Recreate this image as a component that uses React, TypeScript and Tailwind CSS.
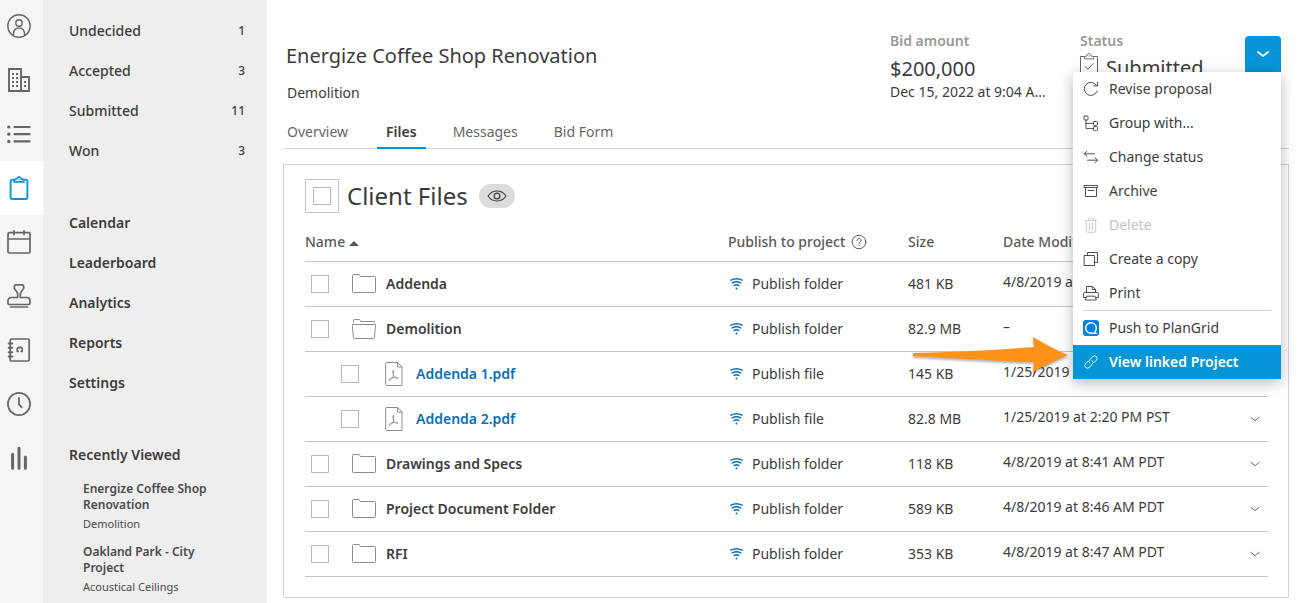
import React from 'react';
import clsx from 'clsx';

type IconProps = { className?: string };

const stroke = {
  fill: 'none',
  stroke: 'currentColor',
  strokeLinecap: 'round',
  strokeLinejoin: 'round',
} as const;

function RailIcon({ name }: { name: string }) {
  return (
    <svg viewBox="0 0 24 24" className="w-6 h-6" strokeWidth={1.7} {...stroke} aria-hidden="true">
      {name === 'Account' && (
        <g strokeWidth={1.4}>
          <circle cx="12" cy="12" r="11.2" />
          <circle cx="12" cy="9" r="3.2" />
          <path d="M6.3 21.3c0-4.6 2-7.4 5.7-7.4s5.7 2.8 5.7 7.4" />
        </g>
      )}
      {name === 'Companies' && (
        <g strokeLinejoin="miter" strokeLinecap="butt">
          <path d="M2 23V1h12v22zM14 9h8v14h-8z" strokeWidth={1.9} />
          <path d="M5 6h2M9 6h2M5 10h2M9 10h2M5 14h2M9 14h2M5 18h2M9 18h2M17 14h2M17 18h2" strokeWidth={2} />
        </g>
      )}
      {name === 'Lists' && (
        <g strokeWidth={2.2}>
          <path d="M7.5 5h15M7.5 12.2h15M7.5 19.4h15" />
          <path d="M1.7 5h.2M1.7 12.2h.2M1.7 19.4h.2" strokeWidth={3.2} />
        </g>
      )}
      {name === 'Bids' && (
        <g strokeWidth={1.9}>
          <path d="M7 3.6H5A1.5 1.5 0 0 0 3.6 5v16.6A1.4 1.4 0 0 0 5 23h14a1.4 1.4 0 0 0 1.4-1.4V5A1.5 1.5 0 0 0 19 3.6h-2" />
          <path d="M7 5.8c0-2 .8-2.8 2.7-2.9.5-1.3 1.2-2 2.3-2s1.8.7 2.3 2c1.9.1 2.7.9 2.7 2.9z" strokeWidth={1.7} />
          <path d="M12 3.3v.2" strokeWidth={1.2} />
        </g>
      )}
      {name === 'Calendar' && (
        <path d="M2.3 2.7h19.4A1.3 1.3 0 0 1 23 4v17.7a1.3 1.3 0 0 1-1.3 1.3H2.3A1.3 1.3 0 0 1 1 21.7V4a1.3 1.3 0 0 1 1.3-1.3zM1 9h22M7 .8v3.7M17 .8v3.7" />
      )}
      {name === 'Approvals' && (
        <g>
          <path d="M10.7 13.500c.2-4.500-.2-5.300-2.300-7.500C6.600 4 7 .8 9 .8h6c2 0 2.400 3.200.6 5.200-2.100 2.200-2.500 3-2.300 7.500H20c1.900 0 3 1.400 3 3.300v2.400c0 .8-.6 1.300-1.300 1.300H2.300c-.7 0-1.300-.5-1.300-1.300v-2.400c0-1.900 1.100-3.300 3-3.300z" />
          <path d="M3.500 23h17" />
        </g>
      )}
      {name === 'Contacts' && (
        <g>
          <path d="M4.500 1h16.200c.9 0 1.500.6 1.500 1.300v19.400c0 .7-.6 1.300-1.500 1.300H4.500c-.8 0-1.300-.6-1.300-1.300V2.300C3.200 1.600 3.700 1 4.500 1z" />
          <path d="M1.700 5.500h3.600M1.700 9.800h3.600M1.700 14.200h3.600M1.700 18.500h3.600" strokeWidth={1.9} />
          <path d="M10.200 13.500h1c-2-1.600-1.600-4 1.500-4.100 3.100.1 3.500 2.500 1.500 4.100h1" strokeWidth={1.6} />
        </g>
      )}
      {name === 'History' && (
        <g>
          <circle cx="12" cy="12" r="11.1" />
          <path d="M12 5.800v6.500l2.800 3" strokeWidth={1.8} />
        </g>
      )}
      {name === 'Insights' && <path d="M5.600 8.300v14M12 2.300v20M18.400 11v11.300" strokeWidth={3} />}
    </svg>
  );
}

function MenuIcon({ name }: { name: string }) {
  if (name === 'plangrid') {
    return (
      <svg viewBox="0 0 16 16" className="w-4 h-4 shrink-0" aria-hidden="true">
        <rect width="16" height="16" rx="3" fill="#0081e3" />
        <path d="M12.900 13.300H8A5.300 5.300 0 1 1 12.900 10c-.4 1-.9 1.600-.9 1.900z" fill="none" stroke="#fff" strokeWidth={1.4} />
      </svg>
    );
  }
  return (
    <svg viewBox="0 0 16 16" className="w-4 h-4 shrink-0" {...stroke} strokeWidth={0.9} aria-hidden="true">
      {name === 'revise' && <path d="M14.200 10A6.600 6.600 0 1 1 13.500 4.300M14.600 1.300v3.600h-3.700" />}
      {name === 'group' && (
        <g>
          <rect x="1" y="1" width="4" height="4" rx=".8" />
          <rect x="10.500" y="6.400" width="4" height="4" rx=".8" />
          <rect x="10.500" y="11.600" width="4" height="4" rx=".8" />
          <path d="M3 5v8.600h7.500M3 8.400h7.500" />
        </g>
      )}
      {name === 'status' && <path d="M11.500 4.800h-10M4 2.300 1.300 4.800 4 7.300M4.500 11.200h10M12 8.700l2.700 2.500-2.700 2.500" />}
      {name === 'archive' && <path d="M1.500 2.500h13v2h-13zM2.500 4.500v9h11v-9M5 7.500h6" />}
      {name === 'delete' && (
        <path d="M2.300 3.500h11.400M5.500 3.300V2c0-.5.3-.8.8-.8h3.400c.5 0 .8.3.8.8v1.300M3.300 3.500v10.400c0 .9.500 1.400 1.400 1.400h6.600c.9 0 1.400-.5 1.400-1.400V3.500M6.500 5.800v7M9.500 5.800v7" />
      )}
      {name === 'copy' && <path d="M1.500 4.500h10v10h-10zM4.500 4.500v-3h10v10h-3" />}
      {name === 'print' && (
        <path d="M3.500 7.500v-6h6l3 2.800v3.200M9.300 1.700v2.800h3M3 12.500H.6V8.300c0-.5.4-.8.9-.8h13c.5 0 .9.300.9.800v4.200H13M4 11.200h8l1.300 3.800H2.700z" />
      )}
      {name === 'link' && (
        <path d="M6.700 9.300a2.600 2.600 0 0 1 0-3.600L9.800 2.600a2.500 2.500 0 0 1 3.600 3.600l-2.600 2.600M9.300 6.700a2.600 2.600 0 0 1 0 3.600l-3.100 3.100a2.500 2.500 0 0 1-3.600-3.600l2.600-2.600" />
      )}
    </svg>
  );
}

function Chevron({ className }: IconProps) {
  return (
    <svg viewBox="0 0 12 8" className={className} {...stroke} aria-hidden="true">
      <path d="M1 2l5 4 5-4" />
    </svg>
  );
}

function FileIcon({ kind }: { kind: string }) {
  return (
    <svg viewBox="0 0 24 24" className="w-6 h-6 shrink-0 text-[#8c8c8c]" {...stroke} strokeWidth={1} aria-hidden="true">
      {kind === 'folder' && <path d="M.5 3.300c0-.5.300-.8.800-.8h5.900l1.200 2h14.300c.5 0 .8.300.8.800v14.400c0 .5-.3.800-.8.800H1.300c-.5 0-.8-.3-.8-.8z" />}
      {kind === 'open' && (
        <g>
          <path d="M1.500 5.500V3.300c0-.5.300-.8.800-.8h5.400l1.200 2h12.800c.5 0 .8.300.8.800v.4" />
          <path d="M.5 7.500h23l-1 13.400c0 .4-.3.600-.7.600H2.200c-.4 0-.7-.2-.7-.6z" />
        </g>
      )}
      {kind === 'pdf' && (
        <g>
          <path d="M4.500.5h11l4.500 4.500v18.500H4.500c-.5 0-.8-.3-.8-.8V1.300c0-.5.300-.8.800-.8zM15.500.5V5H20" />
          <path d="M11.300 8.800c-1.600.3-.4 2.800.300 4.300-.7 2.200-2 4.300-3.300 5.200-1 .7-2-.3-1-1.200 1.500-1.300 5.800-2.300 7.800-1.900 1.300.3 1 1.700-.2 1.400-1.500-.4-3-1.900-3.600-3.600.4-1.500 1.300-4.400 0-4.200z" strokeWidth={0.8} />
        </g>
      )}
    </svg>
  );
}

function PublishIcon() {
  return (
    <svg viewBox="0 0 13 12" className="w-[13px] h-3 shrink-0 text-[#0a70b8]" {...stroke} strokeWidth={1.5} aria-hidden="true">
      <path d="M.9 2.200c3.300-1.700 7.900-1.700 11.200 0M2.300 4.900c2.500-1.400 5.900-1.400 8.400 0M4.200 7.500c1.400-.8 3.200-.8 4.600 0" />
      <path d="M6.500 10.400h.01" strokeWidth={2} />
    </svg>
  );
}

function Checkbox({ label }: { label: string }) {
  return (
    <input
      type="checkbox"
      aria-label={label}
      className="appearance-none block w-[18px] h-[18px] shrink-0 border border-[#b8b8b8] bg-white checked:bg-[#0696d7]"
    />
  );
}

const railItems = ['Account', 'Companies', 'Lists', 'Bids', 'Calendar', 'Approvals', 'Contacts', 'History', 'Insights'];

function IconRail() {
  return (
    <nav aria-label="Main" className="w-[43px] shrink-0 bg-[#f5f5f5] text-[#666]">
      <div className="-mt-px flex flex-col">
        {railItems.map((name) => (
          <button
            key={name}
            aria-label={name}
            className={clsx(
              'h-[54px] pr-[5px] flex items-center justify-center',
              name === 'Bids' && 'bg-white text-[#0696d7]'
            )}
          >
            <RailIcon name={name} />
          </button>
        ))}
      </div>
    </nav>
  );
}

const bidCounts = [
  { label: 'Undecided', count: 1 },
  { label: 'Accepted', count: 3 },
  { label: 'Submitted', count: 11 },
  { label: 'Won', count: 3 },
];

const pages = ['Calendar', 'Leaderboard', 'Analytics', 'Reports', 'Settings'];

const recent = [
  { title: 'Energize Coffee Shop Renovation', trade: 'Demolition' },
  { title: 'Oakland Park - City Project', trade: 'Acoustical Ceilings' },
];

function Sidebar() {
  return (
    <aside className="w-56 shrink-0 bg-[#eee] pt-[11px] pl-[26px] pr-[22px] text-sm text-[#3c3c3c]">
      <div className="flex flex-col">
        {bidCounts.map((item) => (
          <a key={item.label} href="#" className="h-10 flex items-center justify-between font-medium">
            <span>{item.label}</span>
            <span className="text-xs">{item.count}</span>
          </a>
        ))}
      </div>
      <div className="mt-8 flex flex-col">
        {pages.map((page) => (
          <a key={page} href="#" className="h-10 flex items-center font-semibold">
            {page}
          </a>
        ))}
      </div>
      <h2 className="mt-8 h-10 flex items-center font-semibold">Recently Viewed</h2>
      <div className="mt-1.5 pl-3.5 flex flex-col gap-3 text-xs text-[#4a4a4a]">
        {recent.map((item) => (
          <a key={item.title} href="#" className="w-[135px]">
            <div className="leading-4 font-semibold">{item.title}</div>
            <div className="mt-[3px] leading-4 text-[11px]">{item.trade}</div>
          </a>
        ))}
      </div>
    </aside>
  );
}

const menuItems = [
  { label: 'Revise proposal', icon: 'revise' },
  { label: 'Group with...', icon: 'group' },
  { label: 'Change status', icon: 'status' },
  { label: 'Archive', icon: 'archive' },
  { label: 'Delete', icon: 'delete', disabled: true },
  { label: 'Create a copy', icon: 'copy' },
  { label: 'Print', icon: 'print' },
];

const menuRow = 'w-full h-[34px] px-2.5 flex items-center gap-2.5 text-left';

function ActionMenu() {
  return (
    <div className="relative">
      <button aria-label="Bid actions" aria-expanded="true" className="w-9 h-9 rounded-t-sm bg-[#0696d7] text-white flex items-center justify-center">
        <Chevron className="w-3 h-2 stroke-[1.8]" />
      </button>
      <div className="absolute top-full right-0 z-10 w-52 bg-white shadow-[0_4px_14px_rgba(0,0,0,0.28)] text-sm text-[#3c3c3c]">
        {menuItems.map((item) => (
          <button key={item.label} disabled={item.disabled} className={clsx(menuRow, item.disabled && 'text-[#c4c4c4]')}>
            <MenuIcon name={item.icon} />
            {item.label}
          </button>
        ))}
        <div className="mx-2.5 h-px bg-[#d4d4d4]" />
        <button className={menuRow}>
          <MenuIcon name="plangrid" />
          Push to PlanGrid
        </button>
        <div className="relative">
          <a href="#" className={clsx(menuRow, 'bg-[#0696d7] text-white font-semibold')}>
            <MenuIcon name="link" />
            View linked Project
          </a>
          <svg
            viewBox="0 0 164 44"
            className="absolute right-full -top-3 w-[164px] h-11 pointer-events-none drop-shadow-[0_2px_1px_rgba(0,0,0,0.3)]"
            aria-hidden="true"
          >
            <path d="M4 20c40-1 82-3 121-6l-1-10c12 7 23 13 35 18-13 5-24 11-35 17l1-10C84 28 44 25 4 23z" fill="#ff9319" />
          </svg>
        </div>
      </div>
    </div>
  );
}

function BidHeader() {
  return (
    <header className="flex justify-between pr-2">
      <div className="pt-[42px] pl-[3px]">
        <h1 className="text-xl leading-7">Energize Coffee Shop Renovation</h1>
        <p className="mt-[13px] pl-px text-sm leading-5">Demolition</p>
      </div>
      <div className="flex pt-[31px]">
        <div className="w-[190px]">
          <div className="text-sm leading-5 font-semibold text-[#999]">Bid amount</div>
          <div className="mt-1 text-xl leading-7">$200,000</div>
          <div className="text-sm leading-[18px] whitespace-nowrap">Dec 15, 2022 at 9:04 A...</div>
        </div>
        <div className="w-[165px]">
          <div className="text-sm leading-5 font-semibold text-[#999]">Status</div>
          <div className="flex items-start gap-2 text-xl leading-7">
            <svg viewBox="0 0 18 24" className="mt-0.5 w-[18px] h-6 text-[#666]" {...stroke} aria-hidden="true">
              <path d="M4.500 3.500h-4v20h17v-20h-4M4.500 5.500c0-1.700.6-2.300 2.300-2.500C7.200 1.200 8 .5 9 .5s1.800.7 2.200 2.500c1.700.2 2.300.8 2.300 2.500zM9 2.800v.4M5 13.500l3 2.700 5-5.500" />
            </svg>
            <span className="pt-[3px]">Submitted</span>
          </div>
        </div>
        <div className="pt-[5px]">
          <ActionMenu />
        </div>
      </div>
    </header>
  );
}

function Tabs() {
  return (
    <nav aria-label="Bid" className="mt-[19px] h-[27px] flex gap-[18px] border-b border-[#d4d4d4] text-sm leading-5 text-[#666]">
      {['Overview', 'Files', 'Messages', 'Bid Form'].map((tab) => (
        <a
          key={tab}
          href="#"
          className={clsx(
            'h-[27px] px-[9px] first:pl-1 first:pr-[11px] border-b-2',
            tab === 'Files' ? 'border-[#0696d7] font-semibold text-[#3c3c3c]' : 'border-transparent'
          )}
        >
          {tab}
        </a>
      ))}
    </nav>
  );
}

const files = [
  { name: 'Addenda', kind: 'folder', size: '481 KB', date: '4/8/2019 at 8:41 AM PDT' },
  { name: 'Demolition', kind: 'open', size: '82.9 MB', date: '–' },
  { name: 'Addenda 1.pdf', kind: 'pdf', size: '145 KB', date: '1/25/2019 at 2:20 PM PST' },
  { name: 'Addenda 2.pdf', kind: 'pdf', size: '82.8 MB', date: '1/25/2019 at 2:20 PM PST' },
  { name: 'Drawings and Specs', kind: 'folder', size: '118 KB', date: '4/8/2019 at 8:41 AM PDT' },
  { name: 'Project Document Folder', kind: 'folder', size: '589 KB', date: '4/8/2019 at 8:46 AM PDT' },
  { name: 'RFI', kind: 'folder', size: '353 KB', date: '4/8/2019 at 8:47 AM PDT' },
];

function FileTable() {
  return (
    <table className="w-full table-fixed text-sm leading-5 text-left">
      <thead>
        <tr className="h-[37px] border-b border-[#c4c4c4] text-[#5a5a5a]">
          <th className="font-medium">
            <button className="flex items-center gap-1">
              Name
              <svg viewBox="0 0 10 5" className="mt-0.5 w-2.5 h-[5px]" aria-hidden="true">
                <path d="M0 5l5-5 5 5z" fill="#5a5a5a" />
              </svg>
            </button>
          </th>
          <th className="w-[180px] font-medium">
            <span className="flex items-center gap-1.5">
              Publish to project
              <svg viewBox="0 0 16 16" className="w-4 h-4" {...stroke} aria-hidden="true">
                <circle cx="8" cy="8" r="6.800" />
                <path d="M6 6.500c0-2.800 4-2.600 4-.2C10 7.800 8 7.800 8 9.500M8 11.600v.1" />
              </svg>
            </span>
          </th>
          <th className="w-[95px] font-medium">Size</th>
          <th className="w-[240px] font-medium">Date Modified</th>
          <th className="w-[25px]" aria-label="Actions" />
        </tr>
      </thead>
      <tbody>
        {files.map((file) => {
          const isPdf = file.kind === 'pdf';
          return (
            <tr key={file.name} className="h-[45px] border-b border-[#c4c4c4]">
              <td className={isPdf ? 'pl-9' : 'pl-1.5'}>
                <div className="flex items-center">
                  <Checkbox label={`Select ${file.name}`} />
                  <a href="#" className={clsx('ml-[23px] flex items-center gap-2.5 font-semibold', isPdf && 'text-[#0a6eb4]')}>
                    <FileIcon kind={file.kind} />
                    {file.name}
                  </a>
                </div>
              </td>
              <td>
                <button className="pl-0.5 flex items-center gap-[9px]">
                  <PublishIcon />
                  {isPdf ? 'Publish file' : 'Publish folder'}
                </button>
              </td>
              <td>{file.size}</td>
              <td className="pb-1">{file.date}</td>
              <td>
                <button aria-label={`${file.name} actions`} className="flex w-6 h-6 items-center justify-center text-[#666]">
                  <Chevron className="w-2.5 h-2 stroke-[1.2]" />
                </button>
              </td>
            </tr>
          );
        })}
      </tbody>
    </table>
  );
}

export default function App() {
  return (
    <div className="min-h-screen flex bg-white font-['Noto_Sans',sans-serif] text-[#3c3c3c]">
      <IconRail />
      <Sidebar />
      <main className="flex-1 min-w-0 pl-4 pr-3 pb-1">
        <BidHeader />
        <Tabs />
        <section className="mt-[15px] border border-[#d4d4d4] pl-[21px] pr-5 pt-3.5 pb-5">
          <div className="flex items-center">
            <div className="w-[34px] h-[34px] border border-[#c4c4c4] flex items-center justify-center">
              <Checkbox label="Select all files" />
            </div>
            <h2 className="ml-2 text-2xl leading-8">Client Files</h2>
            <button aria-label="Visibility" className="ml-[11px] w-9 h-6 rounded-full bg-[#dcdcdc] flex items-center justify-center">
              <svg viewBox="0 0 20 12" className="w-5 h-3" {...stroke} strokeWidth={1.1} aria-hidden="true">
                <path d="M1 6c4.500-6.600 13.500-6.600 18 0-4.500 6.600-13.500 6.600-18 0z" />
                <circle cx="10" cy="6" r="2.900" strokeWidth={1.3} />
              </svg>
            </button>
          </div>
          <div className="mt-[11px]">
            <FileTable />
          </div>
        </section>
      </main>
    </div>
  );
}
